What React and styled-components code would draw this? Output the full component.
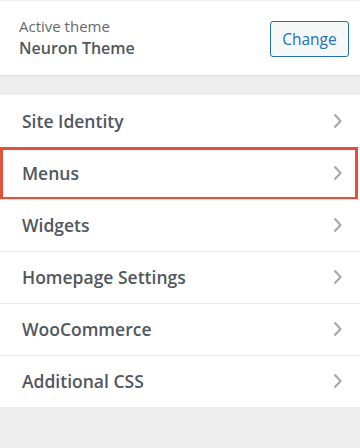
import styled, { createGlobalStyle } from 'styled-components';

const GlobalStyle = createGlobalStyle`
  html, body {
    margin: 0;
    padding: 0;
    background: #eeeeee;
  }
  body {
    font-family: 'Open Sans', 'Noto Sans', sans-serif;
    -webkit-font-smoothing: antialiased;
  }
`;

const Panel = styled.div`
  width: 360px;
  height: 448px;
  background: #eeeeee;
  display: flex;
  flex-direction: column;
`;

const ThemeBar = styled.div`
  height: 76px;
  box-sizing: border-box;
  background: #ffffff;
  border-top: 1px solid #f0f0f1;
  border-bottom: 1px solid #dcdcde;
  display: flex;
  align-items: center;
  justify-content: space-between;
  padding: 0 11px 0 19px;
`;

const ThemeInfo = styled.div`
  display: flex;
  flex-direction: column;
  gap: 2px;
  margin-bottom: 2px;
`;

const Label = styled.span`
  font-size: 15px;
  color: #646970;
  line-height: 20px;
`;

const ThemeName = styled.span`
  font-size: 16px;
  font-weight: 600;
  color: #50575e;
  line-height: 20px;
`;

const ChangeButton = styled.button`
  width: 79px;
  height: 36px;
  margin-top: 2px;
  border: 1px solid #2271b1;
  border-radius: 3px;
  background: #f6f7f7;
  color: #2271b1;
  font-family: inherit;
  font-size: 15.5px;
  padding: 0;
  cursor: pointer;
`;

const Sections = styled.ul`
  list-style: none;
  margin: 19px 0 0;
  padding: 0;
  background: #ffffff;
`;

const Row = styled.li`
  height: 52px;
  box-sizing: border-box;
  display: flex;
  align-items: center;
  justify-content: space-between;
  padding: 0 17px 2px 22px;
  border-top: 1px solid ${(p) => (p.$first ? 'transparent' : '#e8e8e8')};
  position: relative;
  cursor: pointer;
`;

const Highlight = styled.span`
  position: absolute;
  left: 0;
  right: 2px;
  top: -1px;
  bottom: -1px;
  border: 3px solid #e4503a;
  pointer-events: none;
`;

const Title = styled.span`
  font-size: 17.5px;
  font-weight: 600;
  color: #50575e;
  line-height: 24px;
`;

const Chevron = () => (
  <svg width="11" height="18" viewBox="0 0 11 18">
    <path d="M2.5 2.5 L8.5 9 L2.5 15.5" fill="none" stroke="#a7aaad" strokeWidth="2.2" />
  </svg>
);

const items = [
  'Site Identity',
  'Menus',
  'Widgets',
  'Homepage Settings',
  'WooCommerce',
  'Additional CSS',
];

export default function App() {
  return (
    <Panel>
      <GlobalStyle />
      <ThemeBar>
        <ThemeInfo>
          <Label>Active theme</Label>
          <ThemeName>Neuron Theme</ThemeName>
        </ThemeInfo>
        <ChangeButton>Change</ChangeButton>
      </ThemeBar>
      <Sections>
        {items.map((name, i) => (
          <Row key={name} $first={i === 0}>
            <Title>{name}</Title>
            <Chevron />
            {name === 'Menus' && <Highlight />}
          </Row>
        ))}
      </Sections>
    </Panel>
  );
}
